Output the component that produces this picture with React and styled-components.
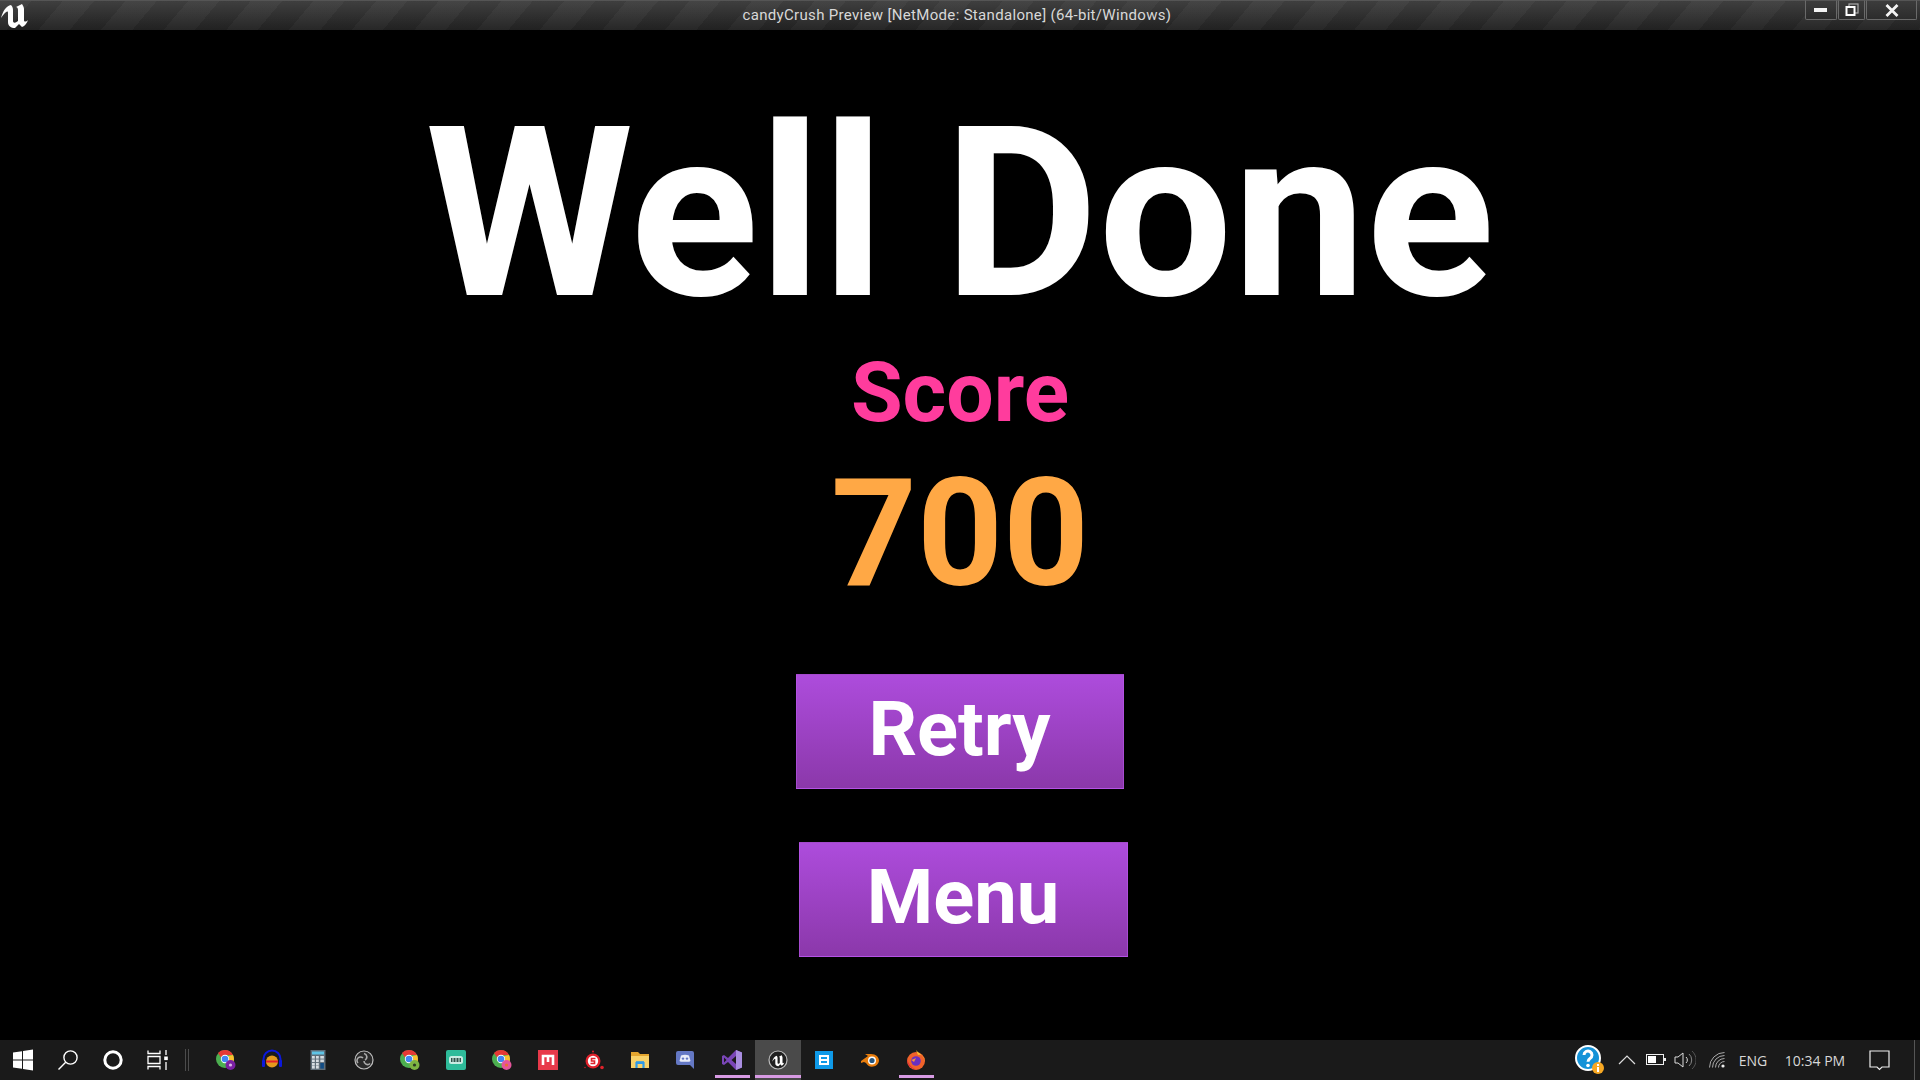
import React from "react";
import styled, { createGlobalStyle } from "styled-components";

const Global = createGlobalStyle`
  html, body { margin: 0; padding: 0; background: #000; }
  body { width: 1920px; height: 1080px; overflow: hidden; font-family: Roboto, "Liberation Sans", sans-serif; }
`;
const Screen = styled.div`
  width: 1920px; height: 1080px; display: flex; flex-direction: column; background: #000;
`;
const TitleBar = styled.header`
  height: 30px; flex: none; position: relative; display: flex; align-items: center; justify-content: center;
  border-top: 1px solid #555; box-sizing: border-box;
  background:
    repeating-linear-gradient(130deg, rgba(255,255,255,0.025) 0 24px, rgba(0,0,0,0.04) 24px 48px),
    linear-gradient(#414141, #222);
`;
const Logo = styled.svg`
  position: absolute; left: 0; top: 0; width: 29px; height: 28px;
`;
const TitleText = styled.span`
  font: 400 15px Roboto, sans-serif; color: #d8d8d8; letter-spacing: 0.32px; margin: -2px 6px 0 0;
`;
const WindowButtons = styled.div`
  position: absolute; right: 3px; top: -1px; display: flex; gap: 1px;
`;
const WinButton = styled.div`
  width: ${p => p.$w}px; height: 20px; display: flex; align-items: center; justify-content: center;
  border: 1px solid #6a6a6a; border-top-color: #555; box-sizing: border-box; border-radius: 0 0 2px 2px;
  background: linear-gradient(#3c3c3c, #2c2c2c);
`;
const Main = styled.main`
  flex: 1; display: flex; flex-direction: column; align-items: center;
`;
const Title = styled.h1`
  margin: 64px 0 0; font: 700 238px/240px Roboto, sans-serif; color: #fff; height: 240px; white-space: nowrap;
`;
const Score = styled.div`
  margin-top: 11px; font: 700 84px/96px Roboto, sans-serif; color: #ff3c9d;
`;
const Points = styled.div`
  margin-top: 13px; font: 700 150px/160px Roboto, sans-serif; color: #ffa845;
`;
const GameButton = styled.button`
  width: ${p => p.$w}px; height: 115px; margin: ${p => p.$top}px 0 0 ${p => p.$shift}px; padding: 0 0 5px; flex: none;
  border: 1px solid rgba(190, 90, 240, 0.5); box-sizing: border-box;
  background: linear-gradient(#ad4cdc, #8b38aa);
  font: 700 76px/104px Roboto, sans-serif; color: #fff;
`;
const Taskbar = styled.footer`
  height: 40px; flex: none; display: flex; align-items: stretch; background: #1a1a1a;
`;
const SysSlot = styled.div`
  width: 45px; flex: none; display: flex; align-items: center; justify-content: center;
`;
const Divider = styled.div`
  width: 4px; height: 22px; align-self: center; margin: 0 14px 0 5px; flex: none;
  border-left: 1px solid #4c4c4c; border-right: 1px solid #4c4c4c; box-sizing: border-box;
`;
const AppSlot = styled.div`
  width: 46px; flex: none; position: relative; display: flex; align-items: center; justify-content: center;
  background: ${p => (p.$active ? "#4a4a4a" : "transparent")};
  &::after {
    content: "";
    display: ${p => (p.$open ? "block" : "none")};
    position: absolute; bottom: 2px; height: 3px; background: #d89be4;
    left: ${p => (p.$active ? "0" : "6px")}; right: ${p => (p.$active ? "0" : "5px")};
  }
`;
const Tray = styled.div`
  margin-left: auto; display: flex; align-items: stretch;
`;
const TrayItem = styled.div`
  width: ${p => p.$w}px; flex: none; display: flex; align-items: center; justify-content: center;
  font: 400 14px "Open Sans", "Noto Sans", sans-serif; color: #d8d8d8; position: relative;
`;
const DesktopEdge = styled.div`
  width: 18px; flex: none; display: flex; justify-content: flex-end; padding-right: 5px; box-sizing: border-box;
  &::after { content: ""; width: 1px; background: #555; }
`;

const UPath = "M1 17C3 10 6 5 11 4C13 6 13 8 13 10L13 20C13 22 15 22 16.5 21L18 20L18 9C18 7 17 6 16 6L22 3C23 5 24 6 24 8L24 19C24 21 26 21 28 19C27 22 25 25 22 26L19 23L15 27C11 27 8 25 8 21L8 12C8 9 5 11 1 17Z";

const Icon = ({ size = 24, children, vb = "0 0 24 24" }) => (
  <svg width={size} height={size} viewBox={vb}>{children}</svg>
);

const Windows = () => <Icon size={22} vb="0 0 22 22"><path fill="#fff" d="M1 3.5 10 2.2V10.4H1ZM11 2 21 .6V10.4H11ZM1 11.4H10V19.8L1 18.5ZM11 11.4H21V21.4L11 20Z" /></Icon>;
const Search = () => <Icon size={22} vb="0 0 22 22"><g fill="none" stroke="#fff" strokeWidth="1.4"><circle cx="13.5" cy="8.5" r="6.6" /><path d="M8.7 13.3 1.5 20.5" /></g></Icon>;
const Cortana = () => <Icon size={22} vb="0 0 22 22"><circle cx="11" cy="11" r="8.2" fill="none" stroke="#fff" strokeWidth="3" /></Icon>;
const TaskView = () => <Icon size={22} vb="0 0 22 22"><g fill="none" stroke="#fff" strokeWidth="1.3"><path d="M1 1.5V4.5H13V1.5M1 20.5V17.5H13V20.5M1 7.5H13V14.5H1Z" /><path d="M19 1V6M19 13V21" /></g><rect x="17.2" y="7.5" width="3.6" height="3.6" fill="#fff" /></Icon>;

const Chrome = ({ badge, glyph }) => (
  <Icon size={20} vb="0 0 20 20">
    <circle cx="9" cy="9" r="9" fill="#4caf50" />
    <path d="M9 0a9 9 0 0 1 8 5H9a4 4 0 0 0-4 2.5L2 3a9 9 0 0 1 7-3Z" fill="#e53935" />
    <path d="M17 5a9 9 0 0 1-6 12.8L13 10a4 4 0 0 0-1-4Z" fill="#fbc02d" />
    <circle cx="9" cy="9" r="4.2" fill="#fff" />
    <circle cx="9" cy="9" r="3.3" fill="#4285f4" />
    <circle cx="14.5" cy="15" r="5" fill={badge} />
    {glyph && <circle cx="14.5" cy="15" r="1.6" fill={glyph} />}
  </Icon>
);
const Headphones = () => <Icon size={22} vb="0 0 22 22"><circle cx="11" cy="12.5" r="6" fill="#e59a1c" /><rect x="5" y="11.5" width="12" height="2" fill="#e3202a" /><path d="M2.5 13V10a8.5 8.5 0 0 1 17 0v3" fill="none" stroke="#0b18dc" strokeWidth="2" /><rect x="1" y="11" width="3" height="7" rx="1" fill="#0b18dc" /><rect x="18" y="11" width="3" height="7" rx="1" fill="#0b18dc" /></Icon>;
const Calculator = () => (
  <Icon size={20} vb="0 0 15 20">
    <rect width="15" height="20" fill="#5f6d78" />
    <rect x="1.5" y="1.5" width="12" height="3" fill="#5fc4e6" />
    {[6, 9.5, 13, 16].map(y => [1.5, 5.5].map(x => <rect key={`${x}${y}`} x={x} y={y} width="2.8" height="2.6" fill="#d7dde2" />))}
    {[6, 9.5].map(y => <rect key={y} x="9.8" y={y} width="3.6" height="2.6" fill="#d7dde2" />)}
    <rect x="9.8" y="13" width="3.6" height="5.6" fill="#134d85" />
  </Icon>
);
const Obs = () => <Icon size={20} vb="0 0 20 20"><circle cx="10" cy="10" r="9" fill="#2a2a2a" stroke="#bdbdbd" strokeWidth="1.2" /><g fill="none" stroke="#aaa" strokeWidth="1.6"><path d="M10 3.5a3.5 3.5 0 0 1 1 6.5M16 13.5a3.5 3.5 0 0 1-6-2.5M4 13a3.5 3.5 0 0 1 5-5" /></g></Icon>;
const Bot = () => <Icon size={20} vb="0 0 20 20"><rect width="20" height="20" rx="2" fill="#2ebb9a" /><rect x="3" y="6" width="14" height="8" rx="2.5" fill="#c9ece3" /><rect x="5" y="8" width="10" height="4" fill="#33534c" /><path d="M7 8V12M10 8V12M13 8V12" stroke="#c9ece3" strokeWidth="1" /></Icon>;
const MBox = () => <Icon size={20} vb="0 0 20 20"><rect width="20" height="20" fill="#e8394a" /><path d="M5 15V6H15V15M10 6V12" fill="none" stroke="#fff" strokeWidth="2.6" /></Icon>;
const Substance = () => <Icon size={20} vb="0 0 20 20"><circle cx="9" cy="1.5" r="1" fill="#e0222b" /><circle cx="9" cy="11" r="7.5" fill="#e0222b" /><circle cx="9" cy="11" r="5.2" fill="#fff" /><path d="M11.5 8.5H7.5V11H10.5V13.5H6.5" fill="none" stroke="#e0222b" strokeWidth="1.6" /><circle cx="18" cy="17.5" r="1.8" fill="#e0222b" /><circle cx="1" cy="17.5" r=".7" fill="#e0222b" /></Icon>;
const Folder = () => <Icon size={20} vb="0 0 20 20"><path d="M1 2H8L10 4H19V8H1Z" fill="#e3a52f" /><rect x="1" y="6" width="18" height="12" fill="#f8d26a" /><path d="M6.5 18V13H13.5V18" fill="none" stroke="#2f9be8" strokeWidth="2.2" /><rect x="6" y="11.2" width="8" height="2.4" fill="#2f9be8" /></Icon>;
const Discord = () => <Icon size={20} vb="0 0 20 20"><path d="M2 1H16A2 2 0 0 1 18 3V19L14 15H2A2 2 0 0 1 0 13V3A2 2 0 0 1 2 1Z" fill="#6478c4" /><path d="M5 5.5C7.5 4.5 10.5 4.5 13 5.5L14.5 11C13 12 12 12 11 11.7H7C6 12 5 12 3.5 11Z" fill="#e8ecf8" /><circle cx="7" cy="8.6" r="1.2" fill="#6478c4" /><circle cx="11" cy="8.6" r="1.2" fill="#6478c4" /></Icon>;
const VS = () => <Icon size={20} vb="0 0 20 20"><path d="M14 0 20 2.5V17.5L14 20 6 12 2 15 0 14V6L2 5 6 8ZM14 6 9.5 10 14 14ZM2 7.5V12.5L4.5 10Z" fill="#7a46b8" /><path d="M14 0 20 2.5V17.5L14 20Z" fill="#a98ee0" /></Icon>;
const UeSmall = () => <Icon size={20} vb="0 0 20 20"><circle cx="10" cy="10" r="9" fill="#202020" stroke="#bbb" strokeWidth="1.2" /><g transform="translate(3.7 4) scale(.45)"><path d={UPath} fill="#fff" /></g></Icon>;
const BSquare = () => <Icon size={18} vb="0 0 18 18"><rect width="18" height="18" fill="#0f9ae8" /><path d="M5 5H13V13H5ZM5 9H13" fill="none" stroke="#fff" strokeWidth="2" /></Icon>;
const Blender = () => <Icon size={20} vb="0 0 20 20"><path d="M1 11 8 6 5 4H11C16 4 19 7 19 11A7 7 0 0 1 6 13L4 12 1 13Z" fill="#e87d0d" /><circle cx="12" cy="10.5" r="4" fill="#fff" /><circle cx="12" cy="10.5" r="2.6" fill="#26567e" /></Icon>;
const Firefox = () => <Icon size={20} vb="0 0 20 20"><circle cx="10" cy="11" r="9" fill="#f0622a" /><path d="M10 0C12 3 18 5 19 12 19 6 14 4 12 5Z" fill="#ffc62e" /><path d="M1.2 9C2 13 5 19 12 19.6 6 19.6 1 16 1.2 9Z" fill="#e5253d" /><circle cx="10" cy="11" r="4.8" fill="#6a2fc0" /><path d="M5.5 10C7 9 9 9 10 8L8 12Z" fill="#f5933a" /></Icon>;

const apps = [
  { id: "c1", node: <Chrome badge="#7b1fa2" glyph="#d7b5e6" /> },
  { id: "hp", node: <Headphones /> },
  { id: "calc", node: <Calculator /> },
  { id: "obs", node: <Obs /> },
  { id: "c2", node: <Chrome badge="#7cb342" glyph="#2c3a24" /> },
  { id: "bot", node: <Bot /> },
  { id: "c3", node: <Chrome badge="#e5559b" glyph="#e8722c" /> },
  { id: "m", node: <MBox /> },
  { id: "sub", node: <Substance /> },
  { id: "fold", node: <Folder /> },
  { id: "disc", node: <Discord /> },
  { id: "vs", node: <VS />, open: true },
  { id: "ue", node: <UeSmall />, open: true, active: true },
  { id: "b", node: <BSquare /> },
  { id: "bl", node: <Blender /> },
  { id: "ff", node: <Firefox />, open: true },
];

export default function App() {
  return (
    <Screen>
      <Global />
      <TitleBar>
        <Logo viewBox="0 0 29 28"><path d={UPath} fill="#fff" /></Logo>
        <TitleText>candyCrush Preview [NetMode: Standalone] (64-bit/Windows)</TitleText>
        <WindowButtons>
          <WinButton $w={32}><svg width="14" height="6"><rect y="1" width="13" height="4" fill="#f4f4f4" /></svg></WinButton>
          <WinButton $w={27}><svg width="14" height="14" viewBox="0 0 14 14"><rect x="4" y="1" width="9" height="9" fill="none" stroke="#aaa" strokeWidth="1.2" /><rect x="1.5" y="4" width="8" height="8" fill="#333" stroke="#fff" strokeWidth="2" /></svg></WinButton>
          <WinButton $w={51}><svg width="14" height="13" viewBox="0 0 14 13"><path d="M1.5 1 12.5 12M12.5 1 1.5 12" stroke="#f4f4f4" strokeWidth="2.8" /></svg></WinButton>
        </WindowButtons>
      </TitleBar>
      <Main>
        <Title>Well Done</Title>
        <Score>Score</Score>
        <Points>700</Points>
        <GameButton $w={328} $top={60} $shift={-1}>Retry</GameButton>
        <GameButton $w={329} $top={53} $shift={6}>Menu</GameButton>
      </Main>
      <Taskbar>
        <SysSlot><Windows /></SysSlot>
        <SysSlot><Search /></SysSlot>
        <SysSlot><Cortana /></SysSlot>
        <SysSlot><TaskView /></SysSlot>
        <Divider />
        {apps.map(a => <AppSlot key={a.id} $open={a.open} $active={a.active}>{a.node}</AppSlot>)}
        <Tray>
          <TrayItem $w={40}>
            <svg width="30" height="30" viewBox="0 0 30 30">
              <circle cx="13" cy="13" r="12" fill="#1593d8" stroke="#fff" strokeWidth="2" />
              <path d="M9 10a4 4 0 1 1 6 3.5c-1.5 1-2 1.6-2 3.2" fill="none" stroke="#fff" strokeWidth="3" />
              <circle cx="13" cy="20.5" r="1.8" fill="#fff" />
              <circle cx="23" cy="23" r="6" fill="#f7a823" />
              <rect x="22" y="22" width="2" height="5" fill="#fff" /><rect x="22" y="19" width="2" height="2" fill="#fff" />
            </svg>
          </TrayItem>
          <TrayItem $w={34}><svg width="18" height="10"><path d="M1 9 9 1 17 9" fill="none" stroke="#ddd" strokeWidth="1.2" /></svg></TrayItem>
          <TrayItem $w={24}><svg width="20" height="12"><rect x=".5" y=".5" width="17" height="10" fill="none" stroke="#eee" /><rect x="2" y="2" width="8" height="7" fill="#fff" /><rect x="18" y="4" width="2" height="3" fill="#eee" /></svg></TrayItem>
          <TrayItem $w={34}><svg width="22" height="20" viewBox="0 0 22 20"><path d="M1 7H4L9 3V17L4 13H1Z" fill="none" stroke="#ddd" /><path d="M12 7a4 4 0 0 1 0 6" fill="none" stroke="#ddd" /><path d="M15 4a8 8 0 0 1 0 12" fill="none" stroke="#888" /><path d="M18 1a12 12 0 0 1 0 18" fill="none" stroke="#555" /></svg></TrayItem>
          <TrayItem $w={30}><svg width="16" height="16" viewBox="0 0 16 16"><g fill="none" stroke="#aaa"><path d="M.5 15.5A15 15 0 0 1 15.5 .5" /><path d="M3.5 15.5A12 12 0 0 1 15.5 3.5" /><path d="M6.5 15.5A9 9 0 0 1 15.5 6.5" /><path d="M9.5 15.5A6 6 0 0 1 15.5 9.5" /></g><circle cx="14" cy="14" r="1.6" fill="#eee" /></svg></TrayItem>
          <TrayItem $w={42}>ENG</TrayItem>
          <TrayItem $w={82}>10:34 PM</TrayItem>
          <TrayItem $w={46}><svg width="21" height="21" viewBox="0 0 21 21"><path d="M1 1H20V17H13L10.5 19.5 8 17H1Z" fill="none" stroke="#eee" strokeWidth="1.2" /></svg></TrayItem>
          <DesktopEdge />
        </Tray>
      </Taskbar>
    </Screen>
  );
}
